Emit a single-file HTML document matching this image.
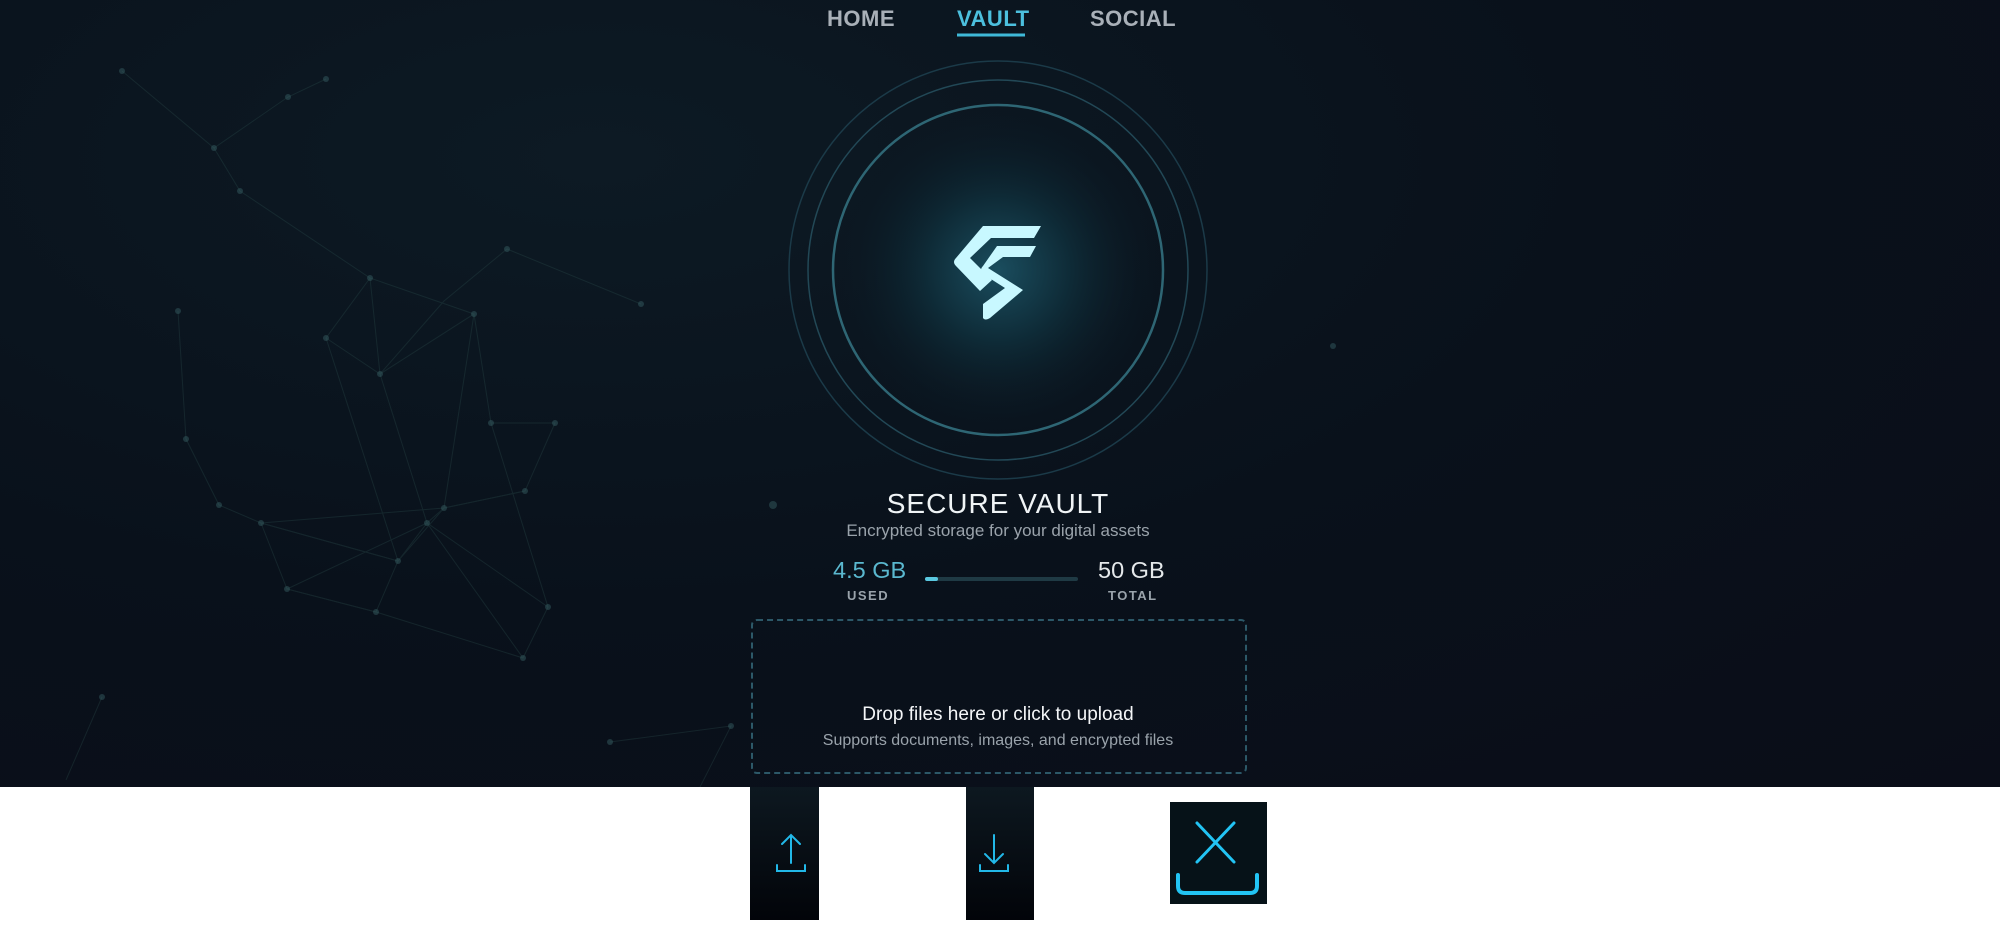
<!DOCTYPE html>
<html><head><meta charset="utf-8"><style>
html,body{margin:0;padding:0;width:2000px;height:920px;overflow:hidden;background:#fff;font-family:"Liberation Sans",sans-serif}
.dark{position:absolute;left:0;top:0;width:2000px;height:787px;background:radial-gradient(ellipse at 30% 20%,#0d1a24 0%,#09111b 50%,#0a0d18 100%);overflow:hidden}
.nav{position:absolute;top:6px;font-size:22px;font-weight:bold;color:#a9b0b8;letter-spacing:0.5px}
.t{position:absolute;left:0;width:2000px;text-align:center}
.tile{position:absolute;background:linear-gradient(#0d1820,#020409)}
</style></head><body>
<div class="dark">
<svg width="2000" height="787" style="position:absolute;left:0;top:0">
<g stroke="#2a4a4a" stroke-width="1" opacity="0.35" fill="none">
<polyline points="214,148 240,191 370,278 326,338 380,374 474,314 491,423 555,423 525,491 444,508 427,523 398,561 261,523 287,589 376,612 523,658 548,607 491,423"/>
<polyline points="122,71 214,148 288,97 326,79"/>
<polyline points="178,311 186,439 219,505 261,523 398,561 444,508 525,491"/>
<polyline points="370,278 380,374 444,301 507,249 641,304"/>
<polyline points="326,338 398,561 376,612 287,589 427,523 548,607"/>
<polyline points="370,278 474,314 444,508 261,523"/>
<polyline points="102,697 66,780"/><polyline points="610,742 731,726 700,787"/>
<polyline points="380,374 427,523 523,658"/>
</g>
<g fill="#3a6468" opacity="0.45">
<circle cx="214" cy="148" r="3"/><circle cx="240" cy="191" r="3"/><circle cx="370" cy="278" r="3"/><circle cx="326" cy="338" r="3"/><circle cx="380" cy="374" r="3"/><circle cx="474" cy="314" r="3"/><circle cx="491" cy="423" r="3"/><circle cx="555" cy="423" r="3"/><circle cx="525" cy="491" r="3"/><circle cx="444" cy="508" r="3"/><circle cx="427" cy="523" r="3"/><circle cx="398" cy="561" r="3"/><circle cx="261" cy="523" r="3"/><circle cx="287" cy="589" r="3"/><circle cx="376" cy="612" r="3"/><circle cx="523" cy="658" r="3"/><circle cx="548" cy="607" r="3"/><circle cx="178" cy="311" r="3"/><circle cx="186" cy="439" r="3"/><circle cx="219" cy="505" r="3"/><circle cx="641" cy="304" r="3"/><circle cx="507" cy="249" r="3"/><circle cx="288" cy="97" r="3"/><circle cx="326" cy="79" r="3"/><circle cx="122" cy="71" r="3"/><circle cx="102" cy="697" r="3"/><circle cx="610" cy="742" r="3"/><circle cx="731" cy="726" r="3"/><circle cx="1333" cy="346" r="3"/><circle cx="773" cy="505" r="4"/>
</g>
<defs><radialGradient id="g"><stop offset="0" stop-color="#1a4d5e"/><stop offset="0.45" stop-color="#0e2a36"/><stop offset="1" stop-color="#0a1620" stop-opacity="0"/></radialGradient></defs>
<circle cx="998" cy="270" r="165" fill="url(#g)"/>
<circle cx="998" cy="270" r="209" stroke="#1b3a48" stroke-width="1.5" fill="none"/>
<circle cx="998" cy="270" r="190" stroke="#224856" stroke-width="1.5" fill="none"/>
<circle cx="998" cy="270" r="165" stroke="#2e6674" stroke-width="2.5" fill="none"/>
<g fill="#c8f8ff">
<path d="M983,226 L1041,226 L1034,238 L991,238 L970,258 L992,280 L980,291 L956,266 Q952,262 956,258 Z"/>
<path d="M997,246 L1036,246 L1030,257 L1003,257 L988,268 L1023,290 L990,318 Q985,321 983,318 L983,304 L1005,288 L983,274 Q979,270 983,266 Z"/>
</g>
<line x1="957" y1="35" x2="1025" y2="35" stroke="#3fb9d8" stroke-width="3"/>
</svg>
<div class="nav" style="left:827px">HOME</div>
<div class="nav" style="left:957px;color:#4cc0de">VAULT</div>
<div class="nav" style="left:1090px">SOCIAL</div>
<div class="t" style="top:488px;font-size:28px;color:#f0f4f6;letter-spacing:1px;left:-2px">SECURE VAULT</div>
<div class="t" style="top:521px;font-size:17px;color:#9aa3ab;left:-2px">Encrypted storage for your digital assets</div>
<div style="position:absolute;left:833px;top:557px;font-size:23.5px;color:#5ab8cf">4.5 GB</div>
<div style="position:absolute;left:847px;top:588px;font-size:13px;font-weight:bold;color:#9aa3ab;letter-spacing:1.5px">USED</div>
<div style="position:absolute;left:925px;top:577px;width:153px;height:4px;border-radius:2px;background:#1f3a44"><div style="width:13px;height:4px;border-radius:2px;background:#5ac8e0"></div></div>
<div style="position:absolute;left:1098px;top:557px;font-size:23.5px;color:#e4e8ea">50 GB</div>
<div style="position:absolute;left:1108px;top:588px;font-size:13px;font-weight:bold;color:#9aa3ab;letter-spacing:1.5px">TOTAL</div>
<div style="position:absolute;left:751px;top:619px;width:492px;height:151px;border:2px dashed #2c5868;border-radius:6px"></div>
<div class="t" style="top:704px;font-size:19px;color:#f4f6f8;left:-2px">Drop files here or click to upload</div>
<div class="t" style="top:732px;font-size:16px;color:#9aa3ab;left:-2px">Supports documents, images, and encrypted files</div>
</div>
<div class="tile" style="left:750px;top:787px;width:69px;height:133px">
<svg width="69" height="133"><g stroke="#22b8e8" stroke-width="2" fill="none" stroke-linecap="round"><path d="M41,76 V48 M32,57 L41,48 L50,57"/><path d="M27,78 V84 H55 V78"/></g></svg></div>
<div class="tile" style="left:966px;top:787px;width:68px;height:133px">
<svg width="68" height="133"><g stroke="#22b8e8" stroke-width="2" fill="none" stroke-linecap="round"><path d="M28,48 V76 M19,67 L28,76 L37,67"/><path d="M14,78 V84 H42 V78"/></g></svg></div>
<div style="position:absolute;left:1170px;top:802px;width:97px;height:102px;background:#061218">
<svg width="97" height="102"><g stroke="#22c4f4" stroke-width="3" fill="none" stroke-linecap="round"><path d="M27,21 L64,60 M64,21 L27,60"/><path d="M8,73 V84 Q8,91 15,91 H80 Q87,91 87,84 V73" stroke-width="4"/></g></svg></div>
</body></html>
